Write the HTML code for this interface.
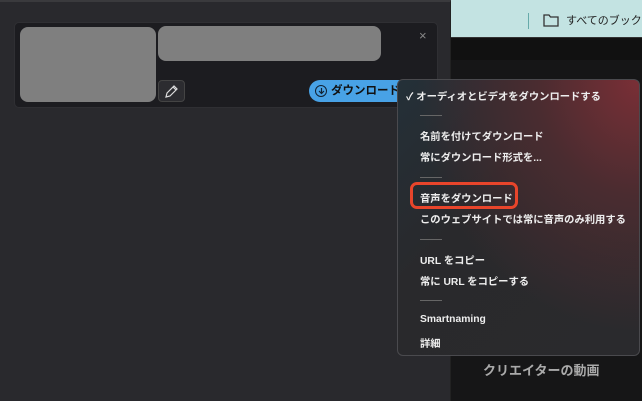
<!DOCTYPE html>
<html><head><meta charset="utf-8"><style>
*{margin:0;padding:0;box-sizing:border-box}
body{width:642px;height:401px;overflow:hidden;background:#161617;position:relative;font-family:"Liberation Sans","Noto Sans CJK JP",sans-serif}
.top{position:absolute;left:451px;top:0;width:191px;height:38px;background:#c3e3e2;border-bottom:1px solid #333}
.top .bar{position:absolute;left:77px;top:13px;width:1px;height:16px;background:#6aa}
.strip{position:absolute;left:451px;top:38px;width:191px;height:22px;background:#111}
.left{position:absolute;left:0;top:0;width:451px;height:401px;background:#29292d;border-top:2px solid #3a3a3d;border-right:1px solid #222}
.card{position:absolute;left:14px;top:22px;width:424px;height:86px;background:#1c1c20;border-radius:5px;border:1px solid #2f2f33}
.thumb{position:absolute;left:20px;top:27px;width:136px;height:75px;background:#7f7f7f;border-radius:8px}
.title{position:absolute;left:158px;top:26px;width:223px;height:35px;background:#7f7f7f;border-radius:8px}
.pen{position:absolute;left:158px;top:80px;width:27px;height:22px;background:#2c2c30;border:1px solid #444;border-radius:4px}
.x{position:absolute;left:419px;top:28px;color:#888;font-size:13px}
.dl{position:absolute;left:309px;top:80px;width:100px;height:22px;background:#48a2e6;border-radius:11px;color:#111;font-size:11.5px;font-weight:bold;line-height:22px;padding-left:22px;white-space:nowrap;overflow:hidden}
.dl .c{position:absolute;left:6px;top:5px;width:12px;height:12px;border:1.3px solid #123;border-radius:50%}
.menu{position:absolute;left:397px;top:79px;width:243px;height:277px;border-radius:6px;border:1px solid #4a4a4e;background:radial-gradient(ellipse at 100% 0%,#7a2f36 0%,#4a2c30 30%,rgba(40,40,44,0) 65%),linear-gradient(135deg,#243038 0%,#29292c 40%,#2a2a2d 100%);color:#eee;font-size:10.3px;font-weight:bold}
.mi{position:absolute;left:22px;white-space:nowrap}
.sep{position:absolute;left:22px;width:22px;height:1px;background:#666}
.hl{position:absolute;left:410px;top:182px;width:108px;height:27px;border:3px solid #e8452b;border-radius:7px}
.bot{position:absolute;left:483px;top:360px;color:#aaa;font-size:13px;font-weight:bold}
</style></head><body>
<div class="top"><div class="bar"></div>
<svg style="position:absolute;left:92px;top:13px" width="16" height="14" viewBox="0 0 16 14"><path d="M1 2h5l1.5 2H15v9H1z" fill="none" stroke="#333" stroke-width="1.3"/></svg>
<span style="position:absolute;left:115px;top:12px;font-size:11px;color:#222;white-space:nowrap">すべてのブックマ</span></div>
<div class="strip"></div>
<div class="left"></div>
<div class="card"></div>
<div class="thumb"></div><div class="title"></div>
<div class="pen"><svg width="25" height="20" viewBox="0 0 25 20"><path d="M7 16l1-4 7-7 3 3-7 7z M14 6l3 3" fill="none" stroke="#ddd" stroke-width="1.2"/></svg></div>
<div class="x">×</div>
<div class="dl"><div class="c"></div><svg style="position:absolute;left:9px;top:8px" width="7" height="7" viewBox="0 0 7 7"><path d="M3.5 0v5M1 3l2.5 2.5L6 3" fill="none" stroke="#123" stroke-width="1.2"/></svg>ダウンロード</div>
<div class="bot">クリエイターの動画</div>
<div class="menu">
<div class="mi" style="left:8px;top:8px">✓ オーディオとビデオをダウンロードする</div>
<div class="sep" style="top:35px"></div>
<div class="mi" style="top:48px">名前を付けてダウンロード</div>
<div class="mi" style="top:69px">常にダウンロード形式を...</div>
<div class="sep" style="top:97px"></div>
<div class="mi" style="top:110px">音声をダウンロード</div>
<div class="mi" style="top:131px">このウェブサイトでは常に音声のみ利用する</div>
<div class="sep" style="top:159px"></div>
<div class="mi" style="top:172px">URL をコピー</div>
<div class="mi" style="top:193px">常に URL をコピーする</div>
<div class="sep" style="top:220px"></div>
<div class="mi" style="top:234px">Smartnaming</div>
<div class="mi" style="top:255px">詳細</div>
</div>
<div class="hl"></div>
</body></html>
